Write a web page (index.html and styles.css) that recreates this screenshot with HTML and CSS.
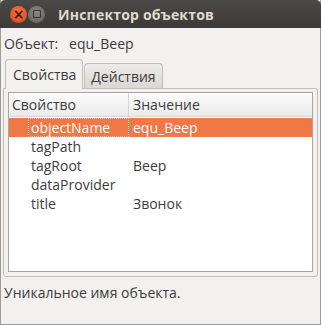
FILE: index.html
```html
<!DOCTYPE html>
<html lang="ru">
<head>
  <meta charset="UTF-8">
  <title>Инспектор объектов</title>
  <link rel="stylesheet" href="styles.css">
</head>
<body>
  <div class="window">
    <!-- Заголовок окна -->
    <div class="titlebar">
      <span class="wbtn wbtn-close">&times;</span>
      <span class="wbtn wbtn-min"><i></i></span>
      <span class="title">Инспектор объектов</span>
    </div>
    <div class="content">
      <div class="object-line">Объект:&nbsp;&nbsp;&nbsp;equ_Beep</div>
      <div class="tabs">
        <div class="tab active">Свойства</div>
        <div class="tab">Действия</div>
      </div>
      <div class="panel">
        <div class="table">
          <div class="row head">
            <div class="cell c1">Свойство</div>
            <div class="cell c2">Значение</div>
          </div>
          <div class="row selected">
            <div class="cell c1"><span class="focus">objectName</span></div>
            <div class="cell c2">equ_Beep</div>
          </div>
          <div class="row">
            <div class="cell c1">tagPath</div>
            <div class="cell c2"></div>
          </div>
          <div class="row">
            <div class="cell c1">tagRoot</div>
            <div class="cell c2">Beep</div>
          </div>
          <div class="row">
            <div class="cell c1">dataProvider</div>
            <div class="cell c2"></div>
          </div>
          <div class="row">
            <div class="cell c1">title</div>
            <div class="cell c2">Звонок</div>
          </div>
        </div>
      </div>
      <div class="status">Уникальное имя объекта.</div>
    </div>
  </div>
</body>
</html>
```

FILE: styles.css
```css
body {
  margin: 0;
  background: #f2f1f0;
  font-family: 'Open Sans', 'DejaVu Sans', sans-serif;
  font-size: 14px;
  color: #3c3c3c;
}
.window {
  width: 321px;
  height: 325px;
  box-sizing: border-box;
  border: 1px solid #9c9b98;
  border-top: none;
  background: #f2f1f0;
}
.titlebar {
  height: 28px;
  background: linear-gradient(#4a4945, #3c3b37);
  border-radius: 5px 5px 0 0;
  display: flex;
  align-items: center;
  padding-left: 10px;
  margin: 0 -1px;
}
.wbtn {
  width: 17px;
  height: 17px;
  border-radius: 50%;
  display: flex;
  align-items: center;
  justify-content: center;
  margin-right: 1px;
  box-sizing: border-box;
}
.wbtn-close {
  background: radial-gradient(circle at 50% 35%, #f57546, #d9431a);
  color: #4a1a08;
  font-size: 14px;
  font-weight: bold;
  font-family: 'DejaVu Sans', sans-serif;
  line-height: 1;
}
.wbtn-min {
  background: radial-gradient(circle at 50% 35%, #8a8984, #5f5e5a);
}
.wbtn-min i {
  width: 6px;
  height: 6px;
  border: 1px solid #35342f;
  border-radius: 1px;
}
.title {
  margin-left: 12px;
  color: #dfdbd2;
  font-weight: bold;
  font-size: 14px;
  letter-spacing: 0.2px;
}
.content {
  padding: 0 2px;
}
.object-line {
  height: 30px;
  line-height: 32px;
  padding-left: 1px;
}
.tabs {
  display: flex;
  align-items: flex-end;
  height: 30px;
  padding-left: 2px;
}
.tab {
  height: 24px;
  line-height: 25px;
  padding: 0 6px;
  border: 1px solid #c0beb9;
  border-bottom: none;
  border-radius: 4px 4px 0 0;
  background: linear-gradient(#ecebe9, #dad8d4);
  margin-left: 1px;
}
.tab.active {
  height: 29px;
  line-height: 30px;
  background: #f2f1f0;
  margin-left: 0;
  padding: 0 6px 0 7px;
  position: relative;
  top: 1px;
}
.panel {
  height: 189px;
  border: 1px solid #c0beb9;
  border-radius: 0 3px 3px 3px;
  padding: 3px 4px 4px 4px;
  box-sizing: border-box;
}
.table {
  height: 100%;
  background: #fff;
  border: 1px solid #a8a6a2;
  box-sizing: border-box;
}
.row {
  display: flex;
  height: 19px;
  line-height: 19px;
}
.row.head {
  height: 23px;
  line-height: 24px;
  background: linear-gradient(#fbfbfb, #eaeaea);
  border-bottom: 1px solid #d8d8d8;
  margin-bottom: 1px;
}
.row.head .c1 {
  padding-left: 3px;
  border-right: 1px solid #d4d4d4;
}
.row.head .c2 {
  padding-left: 4px;
}
.cell {
  white-space: nowrap;
}
.c1 {
  width: 120px;
  padding-left: 22px;
  box-sizing: border-box;
}
.c2 {
  padding-left: 4px;
}
.row.selected {
  background: #f07746;
  color: #fff;
}
.row.selected .c1 {
  padding-left: 19px;
}
.focus {
  display: block;
  outline: 1px dotted #c9c9c9;
  outline-offset: -1px;
  padding-left: 3px;
}
.status {
  padding: 6px 1px;
}
```
